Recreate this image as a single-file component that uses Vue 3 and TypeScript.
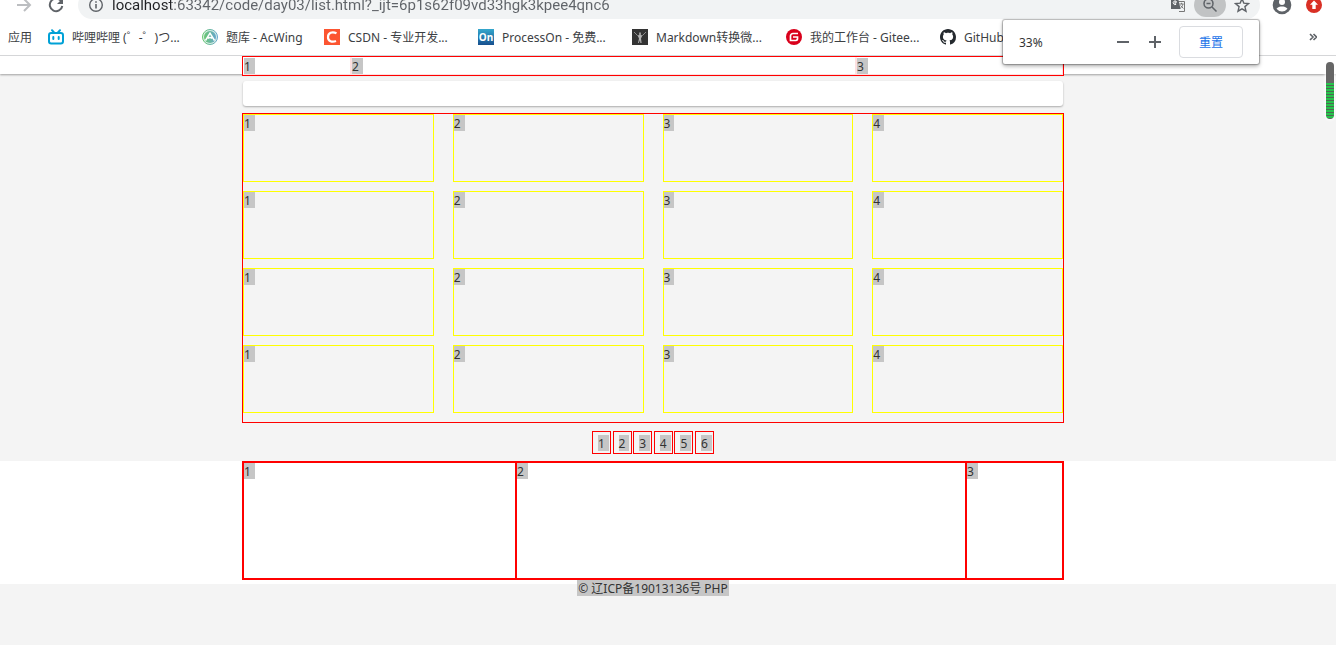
<script setup lang="ts">
import { ref } from 'vue'

interface Bookmark {
  icon: string
  label: string
  fit?: boolean
}

const address = ref('localhost:63342/code/day03/list.html?_ijt=6p1s62f09vd33hgk3kpee4qnc6')
const zoomLevel = ref(33)

const bookmarks: Bookmark[] = [
  { icon: 'bili', label: '哔哩哔哩 (゜-゜)つ...' },
  { icon: 'acwing', label: '题库 - AcWing', fit: true },
  { icon: 'csdn', label: 'CSDN - 专业开发...' },
  { icon: 'processon', label: 'ProcessOn - 免费...' },
  { icon: 'markdown', label: 'Markdown转换微...' },
  { icon: 'gitee', label: '我的工作台 - Gitee...' },
  { icon: 'github', label: 'GitHub', fit: true },
]
const rows = 4
const columns = 4
const pages = 6
</script>

<template>
  <div class="browser">
    <header class="chrome">
      <div class="toolbar">
        <button class="tool forward" aria-label="前进">
          <svg width="16" height="16" viewBox="0 0 16 16"><path d="M1 8h13M8 2l6 6-6 6" fill="none" stroke="#bcbec1" stroke-width="2" /></svg>
        </button>
        <button class="tool" aria-label="重新加载">
          <svg width="16" height="16" viewBox="0 0 16 16"><path d="M13.2 4.2A6.3 6.3 0 1 0 14.3 9" fill="none" stroke="#5f6368" stroke-width="2" /><path d="M15 1v6H9z" fill="#5f6368" /></svg>
        </button>
        <div class="omnibox">
          <svg width="16" height="16" viewBox="0 0 16 16"><circle cx="8" cy="8" r="6.3" fill="none" stroke="#5f6368" stroke-width="1.4" /><path d="M8 7v4.5M8 4.2v1.6" stroke="#5f6368" stroke-width="1.6" /></svg>
          <input v-model="address" class="address" type="text" aria-label="地址" />
          <button class="tool" aria-label="翻译">
            <svg width="16" height="16" viewBox="0 0 16 16">
              <path d="M7 4.5h7.5v10H9" fill="none" stroke="#777" />
              <path d="M1 1h7l2.6 11H1z" fill="#5f6368" />
              <path d="M7 5H5v2.2h1.1A1.8 1.8 0 1 1 6.4 4.6" fill="none" stroke="#fff" />
              <path d="M9.5 7h4M11.5 5.8V7M13 7c-.4 2-1.4 3.300-2.500 4M10.600 8.500l2.800 3" fill="none" stroke="#777" />
            </svg>
          </button>
          <button class="tool lens" aria-label="缩放">
            <svg width="16" height="16" viewBox="0 0 16 16"><circle cx="6.500" cy="6.500" r="4.500" fill="none" stroke="#5f6368" stroke-width="1.500" /><path d="M10 10l4.500 4.500M4.500 6.500h4" stroke="#5f6368" stroke-width="1.500" /></svg>
          </button>
          <button class="tool" aria-label="收藏">
            <svg width="16" height="16" viewBox="0 0 16 16"><path d="M8 1.800l1.800 4.300 4.700.4-3.600 3.100 1.100 4.600L8 11.800l-4 2.400 1.100-4.600L1.500 6.500l4.700-.4z" fill="none" stroke="#5f6368" stroke-width="1.400" /></svg>
          </button>
        </div>
        <button class="tool" aria-label="用户">
          <svg width="20" height="20" viewBox="0 0 20 20"><circle cx="10" cy="10" r="9.300" fill="#5f6368" /><circle cx="10" cy="7" r="3" fill="#fff" /><path d="M4.500 13.800c1.200-1.700 3.500-2.300 5.500-2.300s4.300.6 5.500 2.300A6.800 6.800 0 0 1 10 16.500a6.800 6.800 0 0 1-5.500-2.700z" fill="#fff" /></svg>
        </button>
        <button class="tool" aria-label="更新">
          <svg width="16" height="16" viewBox="0 0 16 16"><circle cx="8" cy="8" r="8" fill="#d93025" /><path d="M8 3.500l4 4.300H9.700V12H6.300V7.800H4z" fill="#fff" /></svg>
        </button>
      </div>

      <nav class="bookmarks">
        <a class="apps" href="#"><span>应用</span></a>
        <a v-for="b in bookmarks" :key="b.icon" href="#" class="bookmark" :class="{ fit: b.fit }">
          <svg width="16" height="16" viewBox="0 0 16 16">
            <g v-if="b.icon === 'bili'" fill="none" stroke="#00a1d6" stroke-width="2" stroke-linecap="round">
              <rect x="1" y="4" width="14" height="10.500" rx="2.200" /><path d="M4 1.200L6 3.500M12 1.200L10 3.500M5.300 8v2M10.700 8v2" />
            </g>
            <g v-else-if="b.icon === 'acwing'">
              <defs><linearGradient id="leaf"><stop offset="0" stop-color="#69c76f" /><stop offset="1" stop-color="#67a6cf" /></linearGradient></defs>
              <circle cx="8" cy="8" r="7.500" fill="#d9eee5" stroke="url(#leaf)" /><circle cx="8" cy="8" r="6" fill="url(#leaf)" />
              <path d="M3.500 11.500L8 4.200l4.500 7.300M6 9.500c1-1.500 3-1.500 4 0" fill="none" stroke="#fff" stroke-width="1.500" />
            </g>
            <g v-else-if="b.icon === 'csdn'">
              <rect width="16" height="16" fill="#fc5531" /><path d="M12.500 4.300C8 2 4 4 4 8.200c0 4 4 5.400 8 3.700" fill="none" stroke="#fff" stroke-width="2.200" />
            </g>
            <g v-else-if="b.icon === 'processon'">
              <defs><linearGradient id="sea" x2="0" y2="1"><stop offset="0" stop-color="#35a8cd" /><stop offset="1" stop-color="#17508f" /></linearGradient></defs>
              <rect width="16" height="16" fill="url(#sea)" /><text x="8" y="12" class="on-mark">On</text>
            </g>
            <g v-else-if="b.icon === 'markdown'">
              <rect width="16" height="16" fill="#343434" />
              <path d="M2 3l3.500 3.500L8 7l2.500-.5L14 3" fill="none" stroke="#8d8d8d" />
              <path d="M7.200 3.500h1.600v2.800l1.400.4L9 9.500l.6 4.500H8.400L8 11l-1.200 3H6l1-4.500-1.200-2.800 1.400-.4z" fill="#b5b5b5" />
            </g>
            <g v-else-if="b.icon === 'gitee'">
              <circle cx="8" cy="8" r="8" fill="#d9001b" /><path d="M12 4.500H7A2.500 2.500 0 0 0 4.500 7v4.500H10A1.800 1.800 0 0 0 11.500 10V8H7" fill="none" stroke="#fff" stroke-width="1.700" />
            </g>
            <path v-else fill="#24292e" d="M8 0C3.580 0 0 3.580 0 8c0 3.540 2.290 6.530 5.470 7.590.4.070.55-.17.55-.38 0-.19-.01-.82-.01-1.490-2.010.37-2.530-.49-2.690-.94-.09-.23-.48-.94-.82-1.130-.28-.15-.68-.52-.01-.53.63-.01 1.080.58 1.230.82.72 1.210 1.870.87 2.330.66.07-.52.28-.87.51-1.070-1.780-.2-3.640-.89-3.640-3.950 0-.87.31-1.590.82-2.150-.08-.2-.36-1.020.08-2.120 0 0 .67-.21 2.200.82.64-.18 1.320-.27 2-.27s1.360.09 2 .27c1.530-1.040 2.200-.82 2.200-.82.44 1.100.16 1.920.08 2.120.51.56.82 1.270.82 2.150 0 3.070-1.870 3.750-3.650 3.950.29.25.54.73.54 1.480 0 1.070-.01 1.930-.01 2.200 0 .21.15.46.55.38A8.010 8.010 0 0 0 16 8c0-4.420-3.580-8-8-8z" />
          </svg>
          <span>{{ b.label }}</span>
        </a>
        <button class="more" aria-label="更多书签">
          <svg width="8" height="8" viewBox="0 0 8 8"><path d="M1 1l3 3-3 3M4.500 1l3 3-3 3" fill="none" stroke="#5f6368" stroke-width="1.600" /></svg>
        </button>
      </nav>

      <div class="zoom-bubble">
        <output>{{ zoomLevel }}%</output>
        <button class="step" aria-label="缩小" @click="zoomLevel--">
          <svg width="12" height="12" viewBox="0 0 12 12"><path d="M0 6h12" stroke="#5f6368" stroke-width="2" /></svg>
        </button>
        <button class="step" aria-label="放大" @click="zoomLevel++">
          <svg width="12" height="12" viewBox="0 0 12 12"><path d="M0 6h12M6 0v12" stroke="#5f6368" stroke-width="2" /></svg>
        </button>
        <button class="reset" @click="zoomLevel = 100">重置</button>
      </div>
    </header>

    <main class="page">
      <div class="band nav-band">
        <div class="container nav-box">
          <div v-for="n in 3" :key="n"><mark>{{ n }}</mark></div>
        </div>
      </div>
      <div class="band"><div class="container panel"></div></div>
      <div class="band">
        <div class="container cards">
          <template v-for="r in rows" :key="r">
            <div v-for="c in columns" :key="c" class="card"><mark>{{ c }}</mark></div>
          </template>
        </div>
      </div>
      <div class="band">
        <nav class="pager">
          <a v-for="p in pages" :key="p" href="#"><mark>{{ p }}</mark></a>
        </nav>
      </div>
      <footer>
        <div class="band foot-band">
          <div class="container foot-box">
            <div v-for="n in 3" :key="n"><mark>{{ n }}</mark></div>
          </div>
        </div>
        <div class="band copyright"><mark>© 辽ICP备19013136号 PHP</mark></div>
      </footer>
    </main>
    <div class="thumb"></div>
  </div>
</template>

<style>
body {
  background: #f4f4f4;
}
</style>

<style scoped>
.browser,
.browser * {
  box-sizing: border-box;
}
.browser {
  position: relative;
  min-height: 100vh;
  overflow: hidden;
  font: 12px/16px "Noto Sans", "Noto Sans CJK SC", sans-serif;
  color: #333;
}
a {
  color: inherit;
  text-decoration: none;
}
svg {
  display: block;
  flex: none;
}
button {
  margin: 0;
  padding: 0;
  border: 0;
  background: none;
  font: inherit;
}
.chrome {
  position: relative;
  background: #fff;
  border-bottom: 1px solid #d5d6d8;
}
.toolbar {
  display: flex;
  align-items: flex-end;
  height: 19px;
  padding: 0 6px 0 8px;
  overflow: hidden;
}
.tool {
  display: flex;
  flex: none;
  align-items: center;
  justify-content: center;
  width: 32px;
  height: 28px;
}
.omnibox {
  display: flex;
  flex: 1;
  align-items: center;
  height: 28px;
  margin: 0 6px;
  padding: 0 2px 0 10px;
  border-radius: 14px;
  background: #f1f3f4;
}
.address {
  flex: 1;
  min-width: 0;
  height: 28px;
  margin-left: 8px;
  padding: 0;
  border: 0;
  outline: 0;
  background: linear-gradient(90deg, #202124 59px, #5f6368 59px);
  -webkit-background-clip: text;
  background-clip: text;
  color: transparent;
  font: 15px/20px Roboto, sans-serif;
}
.lens {
  height: 24px;
  border-radius: 12px;
  background: #c1c3c4;
}
.bookmarks {
  display: flex;
  align-items: center;
  height: 36px;
  padding: 0 19px 0 8px;
  color: #3c4043;
  white-space: nowrap;
}
.bookmarks span {
  display: block;
  padding-top: 2px;
}
.apps {
  width: 40px;
}
.bookmark {
  display: flex;
  flex: none;
  align-items: center;
  gap: 8px;
  width: 154px;
}
.bookmark.fit {
  width: 122px;
}
.on-mark {
  font: bold 10px "Noto Sans", sans-serif;
  fill: #fff;
  text-anchor: middle;
}
.more {
  margin-left: auto;
}
.zoom-bubble {
  position: absolute;
  z-index: 2;
  top: 20px;
  right: 77px;
  display: flex;
  align-items: center;
  width: 256px;
  height: 44px;
  padding: 0 16px;
  border-radius: 2px;
  background: #fff;
  box-shadow: 0 0 1px 1px rgba(0, 0, 0, 0.25), 0 2px 4px rgba(0, 0, 0, 0.35);
}
.zoom-bubble output {
  flex: 1;
  padding-top: 2px;
}
.step {
  display: flex;
  justify-content: center;
  width: 32px;
}
.reset {
  width: 64px;
  height: 32px;
  margin-left: 8px;
  padding-top: 2px;
  border: 1px solid #dadce0;
  border-radius: 4px;
  color: #1a73e8;
}
.band {
  padding-right: 30px;
}
.container {
  max-width: 822px;
  margin: 0 auto;
}
mark {
  display: block;
  width: max-content;
  height: 16px;
  padding-right: 4px;
  background: #c6c6c6;
  color: #333;
  line-height: 18px;
}
.nav-band {
  height: 18px;
  margin-bottom: 7px;
  background: #fff;
  box-shadow: 0 1px 2px rgba(0, 0, 0, 0.35);
}
.nav-box {
  display: grid;
  grid-template-columns: 108fr 505fr 207fr;
  border: 1px solid #f00;
}
.nav-box div {
  border: 1px solid #fde0e0;
  border-top-color: #fff;
}
.nav-box div:first-child {
  border-left-color: #fff;
}
.panel {
  width: calc(100% - 2px);
  max-width: 820px;
  height: 25px;
  margin-bottom: 7px;
  border-radius: 3px;
  background: #fff;
  box-shadow: 0 1px 2px rgba(0, 0, 0, 0.3);
}
.cards {
  display: grid;
  grid-template-columns: repeat(4, 1fr);
  gap: 9px 19px;
  padding-bottom: 9px;
  border: 1px solid #f00;
}
.card {
  height: 68px;
  border: 1px solid #ff0;
}
.pager {
  display: flex;
  justify-content: space-between;
  width: 122px;
  margin: 0 auto;
  padding: 8px 0 7px;
}
.pager a {
  width: 19px;
  padding: 3px 0 2px 5px;
  border: 1px solid #f00;
}
.foot-band {
  padding-bottom: 4px;
  background: #fff;
}
.foot-box {
  display: grid;
  grid-template-columns: 273fr 450fr 97fr;
  border: 1px solid #f00;
}
.foot-box div {
  height: 117px;
  border: 1px solid #f00;
}
.foot-box div + div {
  box-shadow: -1px 0 #f00;
}
.copyright {
  display: flex;
  justify-content: center;
  margin-top: -4px;
}
.copyright mark {
  padding: 0 1px;
}
.thumb {
  position: absolute;
  top: 62px;
  right: 2px;
  width: 8px;
  height: 57px;
  border-radius: 4px;
  background: linear-gradient(#666 21px, transparent 21px),
    repeating-linear-gradient(#27c24c 0 2px, #4c6a52 2px 3px);
  box-shadow: 0 0 3px 1px #fff;
}
</style>
